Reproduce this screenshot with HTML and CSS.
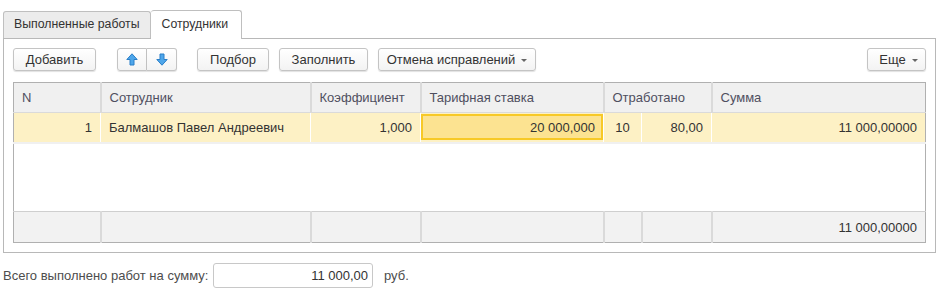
FILE: index.html
```html
<!DOCTYPE html>
<html lang="ru">
<head>
  <meta charset="UTF-8" />
  <title>Сотрудники</title>
  <link rel="stylesheet" href="styles.css">
</head>
<body>

<div class="tabs">
  <div class="tab">Выполненные работы</div>
  <div class="tab active">Сотрудники</div>
</div>

<div class="panel">
  <div class="toolbar">
    <button class="btn btn-add">Добавить</button>
    <div class="btn-group">
      <button class="btn btn-icon">
        <svg width="12" height="13" viewBox="0 0 12 13"><path d="M6 0.8 L11.2 6.5 H8 V12 H4 V6.5 H0.8 Z" fill="#4ea6ea" stroke="#2b7fc8" stroke-width="1" stroke-linejoin="round"/></svg>
      </button>
      <button class="btn btn-icon">
        <svg width="12" height="13" viewBox="0 0 12 13"><path d="M6 12.2 L11.2 6.5 H8 V1 H4 V6.5 H0.8 Z" fill="#4ea6ea" stroke="#2b7fc8" stroke-width="1" stroke-linejoin="round"/></svg>
      </button>
    </div>
    <button class="btn btn-pick">Подбор</button>
    <button class="btn btn-fill">Заполнить</button>
    <button class="btn btn-undo">Отмена исправлений <span class="caret"></span></button>
    <button class="btn btn-more">Еще <span class="caret"></span></button>
  </div>

  <table class="grid">
    <colgroup>
      <col style="width:87px">
      <col style="width:210px">
      <col style="width:110px">
      <col style="width:183px">
      <col style="width:38px">
      <col style="width:70px">
      <col>
    </colgroup>
    <thead>
      <tr>
        <th>N</th>
        <th>Сотрудник</th>
        <th>Коэффициент</th>
        <th>Тарифная ставка</th>
        <th colspan="2">Отработано</th>
        <th>Сумма</th>
      </tr>
    </thead>
    <tbody>
      <tr class="row-selected">
        <td class="num">1</td>
        <td>Балмашов Павел Андреевич</td>
        <td class="num">1,000</td>
        <td class="num"><div class="cell-active">20 000,000</div></td>
        <td class="center">10</td>
        <td class="num">80,00</td>
        <td class="num">11 000,00000</td>
      </tr>
      <tr class="row-empty">
        <td colspan="7"></td>
      </tr>
    </tbody>
    <tfoot>
      <tr>
        <td></td>
        <td></td>
        <td></td>
        <td></td>
        <td></td>
        <td></td>
        <td class="num">11 000,00000</td>
      </tr>
    </tfoot>
  </table>
</div>

<div class="total">
  <span class="total-label">Всего выполнено работ на сумму:</span>
  <div class="total-input">11 000,00</div>
  <span class="total-unit">руб.</span>
</div>

</body>
</html>
```

FILE: styles.css
```css
* {
  box-sizing: border-box;
}

body {
  margin: 0;
  font-family: 'Liberation Sans', Arial, sans-serif;
  font-size: 13px;
  color: #333;
  background: #fff;
}

.tabs {
  display: flex;
  align-items: flex-end;
  margin-top: 9px;
  padding-left: 3px;
  height: 29px;
}

.tab {
  height: 27px;
  line-height: 25px;
  padding: 0 10px;
  font-size: 12.3px;
  background: #ececec;
  border: 1px solid #bfbfbf;
  border-bottom: none;
  border-radius: 3px 3px 0 0;
  color: #333;
}

.tab.active {
  height: 29px;
  line-height: 27px;
  background: #fff;
  margin-bottom: -1px;
  position: relative;
  z-index: 1;
  border-left: none;
  padding: 0 13px 0 11px;
}

.panel {
  margin: 0 7px 0 3px;
  height: 215px;
  border: 1px solid #b8b8b8;
  padding: 9px 9px 0 9px;
}

.toolbar {
  display: flex;
  align-items: center;
  height: 23px;
}

.btn {
  height: 23px;
  padding: 0 6px;
  font-family: inherit;
  font-size: 13px;
  color: #333;
  white-space: nowrap;
  background: linear-gradient(#fff, #f3f3f3);
  border: 1px solid #c4c4c4;
  border-radius: 3px;
  box-shadow: 0 1px 1px rgba(0, 0, 0, 0.12);
  display: flex;
  align-items: center;
  justify-content: center;
  cursor: pointer;
}

.btn-add { width: 83px; }
.btn-pick { width: 72px; margin-left: 20px; }
.btn-fill { width: 89px; margin-left: 10px; }
.btn-undo { width: 158px; margin-left: 10px; }
.btn-more { width: 59px; margin-left: auto; padding: 0 6px 0 10px; }

.btn-group {
  display: flex;
  margin-left: 21px;
}

.btn-group .btn-icon {
  width: 30px;
  padding: 0;
}

.btn-group .btn-icon:first-child {
  border-radius: 3px 0 0 3px;
}

.btn-group .btn-icon:last-child {
  border-radius: 0 3px 3px 0;
  border-left: none;
}

.caret {
  display: inline-block;
  width: 0;
  height: 0;
  margin-left: 6px;
  margin-top: 2px;
  border-left: 3px solid transparent;
  border-right: 3px solid transparent;
  border-top: 3px solid #666;
}

.grid {
  margin-top: 11px;
  width: 100%;
  table-layout: fixed;
  border-collapse: collapse;
  border: 1px solid #b0b0b0;
}

.grid th {
  height: 30px;
  background: #f0f0f0;
  font-weight: normal;
  text-align: left;
  color: #4f4f5f;
  padding: 0 8px;
  border-left: 2px solid #dadada;
  border-bottom: 1px solid #dadada;
  white-space: nowrap;
  overflow: hidden;
}

.grid th:first-child {
  border-left: none;
}

.grid td {
  padding: 0 8px;
  white-space: nowrap;
  overflow: hidden;
}

.row-selected td {
  height: 30px;
  background: #fdf1c5;
  border-left: 1px solid #fff;
  border-bottom: 2px solid #f0f0f0;
}

.row-selected td:first-child {
  border-left: none;
}

.row-selected td.num {
  text-align: right;
}

.row-selected td.center {
  text-align: center;
  padding: 0;
}

.row-selected td:has(.cell-active) {
  padding: 1px 0 1px 0;
}

.cell-active {
  height: 26px;
  line-height: 24px;
  background: #fce391;
  border: 2px solid #f7c927;
  padding: 0 6px;
  text-align: right;
}

.row-empty td {
  height: 69px;
  background: #fff;
}

.grid tfoot td {
  height: 31px;
  background: #f2f2f2;
  border-left: 2px solid #dadada;
  border-top: 1px solid #cfcfcf;
  text-align: right;
}

.grid tfoot td:first-child {
  border-left: none;
}

.total {
  display: flex;
  align-items: center;
  margin-top: 10px;
  padding-left: 3px;
  height: 25px;
}

.total-label {
  color: #4d4d4d;
  width: 210px;
}

.total-input {
  width: 160px;
  height: 25px;
  line-height: 23px;
  border: 1px solid #c8c8c8;
  border-radius: 3px;
  text-align: right;
  padding: 0 4px;
  color: #333;
}

.total-unit {
  margin-left: 11px;
  color: #4d4d4d;
}
```
